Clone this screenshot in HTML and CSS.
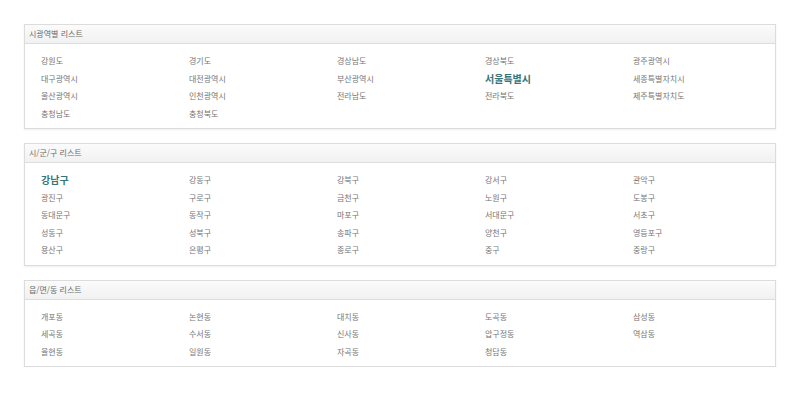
FILE: index.html
```html
<!DOCTYPE html>
<html lang="ko">
<head>
<meta charset="utf-8">
<title>지역 리스트</title>
<link rel="stylesheet" href="styles.css">
</head>
<body>
<div class="page">
  <section class="panel">
    <h2 class="panel-head">시광역별 리스트</h2>
    <ul class="list">
      <li>강원도</li><li>경기도</li><li>경상남도</li><li>경상북도</li><li>광주광역시</li>
      <li>대구광역시</li><li>대전광역시</li><li>부산광역시</li><li class="on">서울특별시</li><li>세종특별자치시</li>
      <li>울산광역시</li><li>인천광역시</li><li>전라남도</li><li>전라북도</li><li>제주특별자치도</li>
      <li>충청남도</li><li>충청북도</li>
    </ul>
  </section>
  <section class="panel">
    <h2 class="panel-head">시/군/구 리스트</h2>
    <ul class="list">
      <li class="on">강남구</li><li>강동구</li><li>강북구</li><li>강서구</li><li>관악구</li>
      <li>광진구</li><li>구로구</li><li>금천구</li><li>노원구</li><li>도봉구</li>
      <li>동대문구</li><li>동작구</li><li>마포구</li><li>서대문구</li><li>서초구</li>
      <li>성동구</li><li>성북구</li><li>송파구</li><li>양천구</li><li>영등포구</li>
      <li>용산구</li><li>은평구</li><li>종로구</li><li>중구</li><li>중랑구</li>
    </ul>
  </section>
  <section class="panel">
    <h2 class="panel-head">읍/면/동 리스트</h2>
    <ul class="list">
      <li>개포동</li><li>논현동</li><li>대치동</li><li>도곡동</li><li>삼성동</li>
      <li>세곡동</li><li>수서동</li><li>신사동</li><li>압구정동</li><li>역삼동</li>
      <li>율현동</li><li>일원동</li><li>자곡동</li><li>청담동</li>
    </ul>
  </section>
</div>
</body>
</html>
```
FILE: styles.css
```css
html, body {
  margin: 0;
  padding: 0;
  background: #ffffff;
}
body {
  font-family: "Noto Sans CJK KR", "Noto Sans", sans-serif;
  color: #6a6a6a;
}
.page {
  padding: 24px 26px 0 24px;
  display: flex;
  flex-direction: column;
  gap: 14px;
}
.panel {
  border: 1px solid #dcdcdc;
  background: #ffffff;
  box-shadow: 0 1px 2px rgba(0, 0, 0, 0.07);
}
.panel-head {
  margin: 0;
  height: 18px;
  line-height: 18px;
  padding-left: 4px;
  font-size: 8px;
  font-weight: normal;
  color: #6a6a6a;
  background: linear-gradient(#fbfbfb, #f1f1f1);
  border-bottom: 1px solid #dddddd;
}
.list {
  list-style: none;
  margin: 0;
  padding: 8px 0 6px 16px;
  display: grid;
  grid-template-columns: repeat(5, 148px);
  grid-auto-rows: 17.5px;
}
.list li {
  line-height: 17.5px;
  font-size: 8px;
  color: #767676;
  white-space: nowrap;
}
.list li.on {
  font-size: 10px;
  font-weight: bold;
  color: #35757b;
}
```
